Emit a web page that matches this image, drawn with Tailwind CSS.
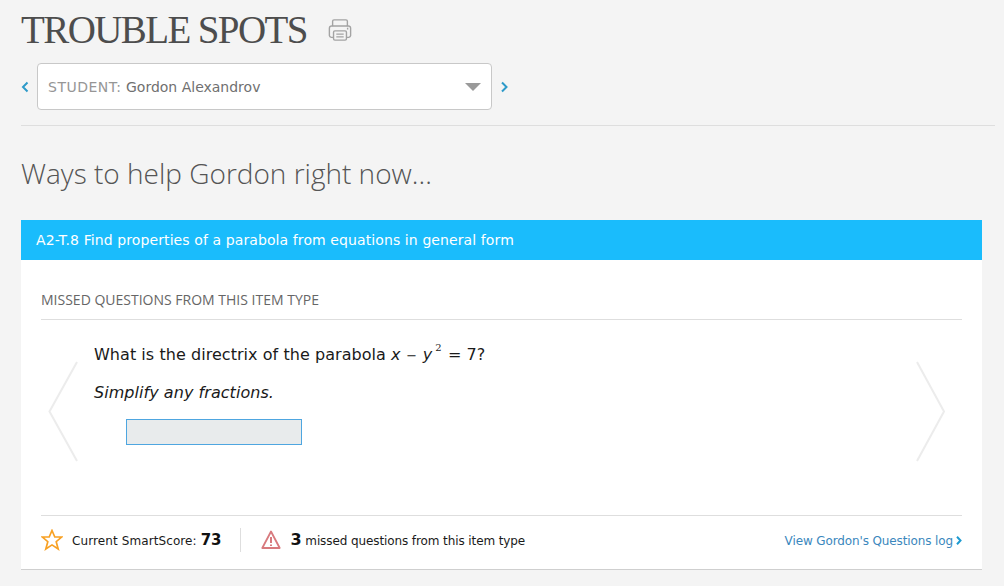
<!DOCTYPE html>
<html lang="en">
  <head>
    <meta charset="UTF-8" />
    <title>Trouble spots</title>
    <script src="https://cdn.jsdelivr.net/npm/@tailwindcss/browser@4"></script>
  </head>
  <body class="h-[586px] overflow-hidden bg-[#f4f4f4] font-['DejaVu_Sans',sans-serif]">
    <div class="pl-[21px] pr-[9px]">
      <!-- Title -->
      <div class="flex h-[63px] items-start pt-[9px]">
        <h1 class="font-['Liberation_Serif',serif] text-[39px] leading-[42px] font-normal tracking-[-1.6px] text-[#4d4d4d]">TROUBLE SPOTS</h1>
        <svg class="mt-[9px] ml-[21px]" width="24" height="24" viewBox="0 0 26 26" fill="none" stroke="#a3a3a3" stroke-width="1.5">
          <path d="M5 9V3.5a1.5 1.5 0 0 1 1.5-1.5h13A1.5 1.5 0 0 1 21 3.5V9" />
          <path d="M6 21H3.5A2.5 2.5 0 0 1 1.5 19v-8A2.5 2.5 0 0 1 4 8.7h18a2.5 2.5 0 0 1 2.5 2.3v8a2.5 2.5 0 0 1-2 2H20" />
          <rect x="6" y="14" width="14" height="10" rx="1.5" />
          <path d="M9 17.5h8M9 20.5h8" />
          <path d="M20.5 11.5h1.5" stroke-width="2" />
        </svg>
      </div>

      <!-- Student select -->
      <div class="flex items-center">
        <svg class="w-[16px]" width="16" height="12" viewBox="0 0 16 12" fill="none" stroke="#2d9ac9" stroke-width="2"><path d="M6.5 1.5 2 6l4.500 4.500" /></svg>
        <div class="flex h-[47px] w-[455px] items-center justify-between rounded-[4px] border border-[#c8c8c8] bg-white pr-[10px] pl-[10px]">
          <span class="pt-[1px] text-[14px] text-[#707070]"><span class="tracking-[0.5px] text-[#969696]">STUDENT:</span> Gordon Alexandrov</span>
          <span class="h-0 w-0 border-x-[8px] border-t-[8px] border-x-transparent border-t-[#9a9a9a]"></span>
        </div>
        <svg class="ml-[8px]" width="10" height="12" viewBox="0 0 10 12" fill="none" stroke="#2d9ac9" stroke-width="2"><path d="M2 1.500 6.500 6 2 10.500" /></svg>
      </div>

      <div class="mt-[15px] border-t border-[#dedede]"></div>

      <h2 class="mt-[28px] font-['Open_Sans',sans-serif] text-[28px] leading-[38px] font-light text-[#555]">Ways to help Gordon right now...</h2>

      <!-- Card -->
      <div class="relative mt-[28px] h-[350px] w-[961px] border-b border-[#cfcfcf] bg-white">
        <div class="flex h-[40px] items-center bg-[#1abcfc] pl-[15px] text-[14px] tracking-[0.1px] text-white">A2-T.8 Find properties of a parabola from equations in general form</div>

        <div class="px-[20px]">
          <div class="flex h-[60px] items-end border-b border-[#dedede] pb-[10px] font-['Open_Sans',sans-serif] text-[14px] leading-[18px] text-[#666]">MISSED QUESTIONS FROM THIS ITEM TYPE</div>

          <div class="h-[196px] border-b border-[#dedede] pt-[23px] pl-[53px] text-[16px] leading-[24px] tracking-[0.05px] text-[#1a1a1a]">
            <p class="h-[24px]">What is the directrix of the parabola <i>x</i> <span class="mx-[0.5px] text-[13px]">&minus;</span> <i>y</i><sup class="relative top-[-9px] mr-[1px] ml-[3px] align-baseline font-['DejaVu_Serif',serif] text-[10px] leading-none">2</sup> = 7?</p>
            <p class="mt-[14px] italic">Simplify any fractions.</p>
            <div class="mt-[14px] ml-[32px] h-[26px] w-[176px] border border-[#4ea6e0] bg-[#e8ebec]"></div>
          </div>

          <!-- Footer row -->
          <div class="flex h-[48px] items-center justify-between">
            <div class="flex items-center">
              <svg width="22" height="22" viewBox="0 0 22 22" fill="none" stroke="#f8a124" stroke-width="1.700">
                <path d="M11 1.500 13.800 8H20.800L15.200 12.700 17.200 20 11 15.900 4.800 20 6.800 12.700 1.200 8H8.200Z" />
              </svg>
              <span class="ml-[9px] text-[12px] tracking-[0.1px] text-[#1a1a1a]">Current SmartScore: <b class="text-[15px] tracking-[0] text-[#111]">73</b></span>
              <span class="mr-[20px] ml-[18px] h-[24px] border-l border-[#dedede]"></span>
              <svg width="20" height="20" viewBox="0 0 20 20" fill="none" stroke="#d87a7e" stroke-width="1.800" stroke-linejoin="round">
                <path d="M10 1.500 18.700 18H1.300Z" />
                <path d="M10 7v6M10 14.500v1.500" stroke-width="2" />
              </svg>
              <span class="ml-[10px] text-[12px] tracking-[-0.1px] text-[#1a1a1a]"><b class="text-[16px] text-[#111]">3</b> missed questions from this item type</span>
            </div>
            <a class="flex items-center pt-[1px] text-[12px] tracking-[-0.12px] text-[#3a87bd]">View Gordon's Questions log<svg class="ml-[3px]" width="6" height="9" viewBox="0 0 6 9" fill="none" stroke="#1d9bd1" stroke-width="2"><path d="M1 .8 4.500 4.500 1 8.200" /></svg></a>
          </div>
        </div>

        <!-- Carousel arrows -->
        <svg class="absolute top-[141px] left-[27px]" width="30" height="101" viewBox="0 0 30 101" fill="none" stroke="#ececec" stroke-width="2"><path d="M29 1 1.500 50.500 29 100" /></svg>
        <svg class="absolute top-[141px] left-[895px]" width="30" height="101" viewBox="0 0 30 101" fill="none" stroke="#ececec" stroke-width="2"><path d="M1 1 28 50.500 1 100" /></svg>
      </div>
    </div>
  </body>
</html>
